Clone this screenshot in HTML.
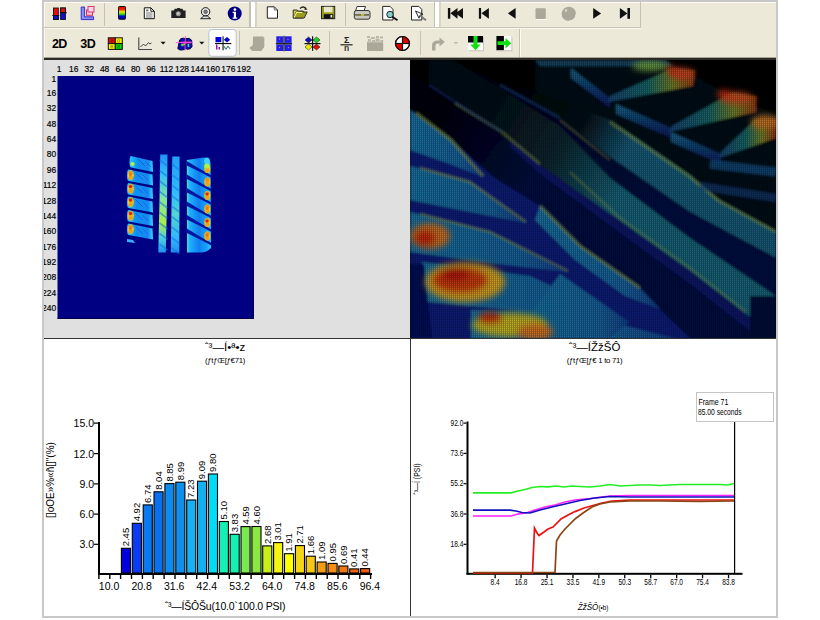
<!DOCTYPE html>
<html><head><meta charset="utf-8"><style>html,body{margin:0;padding:0;background:#fff;width:820px;height:620px;overflow:hidden}svg{display:block}</style></head><body>
<svg width="820" height="620" viewBox="0 0 820 620" font-family="'Liberation Sans', sans-serif">
<!-- window frame -->
<rect x="42" y="0" width="736" height="618" fill="#c8c8c8"/>
<rect x="44" y="2" width="732" height="614" fill="#ffffff"/>
<!-- toolbar bg -->
<rect x="44" y="2" width="732" height="56" fill="#ece9d8"/>
<rect x="44" y="2" width="732" height="1" fill="#fbfaf5"/>
<rect x="44" y="2" width="1" height="55" fill="#fbfaf5"/>
<rect x="44" y="27" width="597" height="1" fill="#c9c6b5"/>
<rect x="44" y="28" width="597" height="1" fill="#f8f7f0"/>
<rect x="44" y="57" width="732" height="1" fill="#a8a594"/>
<rect x="44" y="58" width="732" height="2" fill="#2b2a26"/>
<!-- toolbar group separators row1 -->
<rect x="104" y="3" width="1" height="23" fill="#c5c2b2"/>
<rect x="249" y="2" width="2" height="25" fill="#c5c2b2"/>
<rect x="251" y="2" width="4" height="25" fill="#ffffff"/>
<rect x="255" y="2" width="2" height="25" fill="#d8d5c5"/>
<rect x="345" y="3" width="1" height="23" fill="#c5c2b2"/>
<rect x="434" y="2" width="1" height="25" fill="#c5c2b2"/>
<rect x="435" y="2" width="4" height="25" fill="#ffffff"/>
<rect x="439" y="2" width="2" height="25" fill="#d8d5c5"/>
<rect x="640" y="2" width="1" height="25" fill="#c5c2b2"/>
<!-- row2 separators -->
<rect x="239" y="31" width="1" height="24" fill="#c5c2b2"/>
<rect x="329" y="31" width="1" height="24" fill="#c5c2b2"/>
<rect x="420" y="31" width="1" height="24" fill="#c5c2b2"/>
<rect x="519" y="29" width="1" height="28" fill="#c5c2b2"/>
<rect x="520" y="29" width="1" height="28" fill="#fbfaf5"/>
<!-- panels -->
<rect x="44" y="60" width="366" height="278" fill="#e0e0e0"/>
<rect x="410" y="60" width="366" height="278" fill="#000000"/>
<rect x="44" y="338" width="732" height="1" fill="#333333"/>
<rect x="410" y="339" width="1" height="277" fill="#333333"/>

<defs><clipPath id="lp"><rect x="44" y="60" width="366" height="278"/></clipPath></defs>
<rect x="57.5" y="76" width="196.5" height="243" fill="#000082"/><rect x="253" y="76" width="1" height="243" fill="#000040"/><rect x="57.5" y="318" width="196.5" height="1" fill="#000040"/>
<g font-size="9.6" fill="#000" stroke="#000" stroke-width="0.2" clip-path="url(#lp)">
<text transform="translate(59.2,72.2) scale(0.88,1)" text-anchor="middle">1</text>
<text transform="translate(73.7,72.2) scale(0.88,1)" text-anchor="middle">16</text>
<text transform="translate(89.2,72.2) scale(0.88,1)" text-anchor="middle">32</text>
<text transform="translate(104.6,72.2) scale(0.88,1)" text-anchor="middle">48</text>
<text transform="translate(120.1,72.2) scale(0.88,1)" text-anchor="middle">64</text>
<text transform="translate(135.6,72.2) scale(0.88,1)" text-anchor="middle">80</text>
<text transform="translate(151.1,72.2) scale(0.88,1)" text-anchor="middle">96</text>
<text transform="translate(166.5,72.2) scale(0.88,1)" text-anchor="middle">112</text>
<text transform="translate(182.0,72.2) scale(0.88,1)" text-anchor="middle">128</text>
<text transform="translate(197.5,72.2) scale(0.88,1)" text-anchor="middle">144</text>
<text transform="translate(212.9,72.2) scale(0.88,1)" text-anchor="middle">160</text>
<text transform="translate(228.4,72.2) scale(0.88,1)" text-anchor="middle">176</text>
<text transform="translate(243.9,72.2) scale(0.88,1)" text-anchor="middle">192</text>
<text transform="translate(56.2,81.5) scale(0.88,1)" text-anchor="end">1</text>
<text transform="translate(56.2,95.9) scale(0.88,1)" text-anchor="end">16</text>
<text transform="translate(56.2,111.3) scale(0.88,1)" text-anchor="end">32</text>
<text transform="translate(56.2,126.7) scale(0.88,1)" text-anchor="end">48</text>
<text transform="translate(56.2,142.0) scale(0.88,1)" text-anchor="end">64</text>
<text transform="translate(56.2,157.4) scale(0.88,1)" text-anchor="end">80</text>
<text transform="translate(56.2,172.8) scale(0.88,1)" text-anchor="end">96</text>
<text transform="translate(56.2,188.1) scale(0.88,1)" text-anchor="end">112</text>
<text transform="translate(56.2,203.5) scale(0.88,1)" text-anchor="end">128</text>
<text transform="translate(56.2,218.9) scale(0.88,1)" text-anchor="end">144</text>
<text transform="translate(56.2,234.3) scale(0.88,1)" text-anchor="end">160</text>
<text transform="translate(56.2,249.6) scale(0.88,1)" text-anchor="end">176</text>
<text transform="translate(56.2,265.0) scale(0.88,1)" text-anchor="end">192</text>
<text transform="translate(56.2,280.4) scale(0.88,1)" text-anchor="end">208</text>
<text transform="translate(56.2,295.7) scale(0.88,1)" text-anchor="end">224</text>
<text transform="translate(56.2,311.1) scale(0.88,1)" text-anchor="end">240</text>
</g>
<defs>
<filter id="tb" x="-10%" y="-10%" width="120%" height="120%"><feGaussianBlur stdDeviation="0.55"/></filter>
<linearGradient id="lcol" x1="0" y1="0" x2="1" y2="0">
<stop offset="0" stop-color="#20c8ff"/><stop offset="0.35" stop-color="#1090f4"/><stop offset="0.8" stop-color="#1488f0"/><stop offset="1" stop-color="#40d0ff"/></linearGradient>
<linearGradient id="rcol" x1="0" y1="0" x2="1" y2="0">
<stop offset="0" stop-color="#50e0c0"/><stop offset="0.12" stop-color="#20b0ff"/><stop offset="0.5" stop-color="#1080f0"/><stop offset="0.8" stop-color="#18a0f8"/><stop offset="1" stop-color="#30c8ff"/></linearGradient>
<linearGradient id="s1" x1="0" y1="0" x2="0" y2="1">
<stop offset="0" stop-color="#2090f8"/><stop offset="0.2" stop-color="#30c0f8"/><stop offset="0.45" stop-color="#80e8a0"/><stop offset="0.7" stop-color="#a8f048"/><stop offset="0.85" stop-color="#50d0e0"/><stop offset="1" stop-color="#2090f0"/></linearGradient>
<linearGradient id="s2" x1="0" y1="0" x2="0" y2="1">
<stop offset="0" stop-color="#20a0f8"/><stop offset="0.4" stop-color="#30c0f8"/><stop offset="0.6" stop-color="#50d8d0"/><stop offset="0.85" stop-color="#30b8f8"/><stop offset="1" stop-color="#2090f0"/></linearGradient>
</defs>
<g filter="url(#tb)">
<path d="M131,156.0 L152.5,161.0 L153,172.0 L131,167.5 Q129.5,167.0 129.5,162.0 Q129.5,156.5 131,156.0 z" fill="url(#lcol)"/>
<ellipse cx="132.5" cy="164.0" rx="2.2" ry="2" fill="#b0f050"/>
<path d="M138,159.0 l7,7" stroke="#0850d0" stroke-width="1" opacity="0.7"/>
<path d="M145,161.0 l6,6" stroke="#0850d0" stroke-width="0.8" opacity="0.6"/>
<path d="M128.5,169.5 L152.5,174.5 L153,185.5 L128.5,181.0 Q127.0,180.5 127.0,175.5 Q127.0,170.0 128.5,169.5 z" fill="url(#lcol)"/>
<ellipse cx="130.8" cy="175.3" rx="3" ry="5" fill="#e8d020"/>
<ellipse cx="130.8" cy="173.0" rx="2.2" ry="2.2" fill="#f09018"/>
<ellipse cx="130.8" cy="177.5" rx="2.2" ry="2.2" fill="#f0a018"/>
<ellipse cx="130.5" cy="174.5" rx="1.4" ry="1.4" fill="#f07018"/>
<path d="M135.5,172.5 l7,7" stroke="#0850d0" stroke-width="1" opacity="0.7"/>
<path d="M142.5,174.5 l6,6" stroke="#0850d0" stroke-width="0.8" opacity="0.6"/>
<path d="M128.5,183.0 L152.5,188.0 L153,199.0 L128.5,194.5 Q127.0,194.0 127.0,189.0 Q127.0,183.5 128.5,183.0 z" fill="url(#lcol)"/>
<ellipse cx="130.8" cy="188.8" rx="3" ry="5" fill="#e8d020"/>
<ellipse cx="130.8" cy="186.5" rx="2.2" ry="2.2" fill="#f09018"/>
<ellipse cx="130.8" cy="191.0" rx="2.2" ry="2.2" fill="#f0a018"/>
<ellipse cx="130.5" cy="186.5" rx="1.7" ry="1.7" fill="#e02808"/>
<path d="M135.5,186.0 l7,7" stroke="#0850d0" stroke-width="1" opacity="0.7"/>
<path d="M142.5,188.0 l6,6" stroke="#0850d0" stroke-width="0.8" opacity="0.6"/>
<path d="M128.5,196.5 L152.5,201.5 L153,212.5 L128.5,208.0 Q127.0,207.5 127.0,202.5 Q127.0,197.0 128.5,196.5 z" fill="url(#lcol)"/>
<ellipse cx="130.8" cy="202.3" rx="3" ry="5" fill="#e8d020"/>
<ellipse cx="130.8" cy="200.0" rx="2.2" ry="2.2" fill="#f09018"/>
<ellipse cx="130.8" cy="204.5" rx="2.2" ry="2.2" fill="#f0a018"/>
<ellipse cx="130.5" cy="200.0" rx="1.7" ry="1.7" fill="#e02808"/>
<path d="M135.5,199.5 l7,7" stroke="#0850d0" stroke-width="1" opacity="0.7"/>
<path d="M142.5,201.5 l6,6" stroke="#0850d0" stroke-width="0.8" opacity="0.6"/>
<path d="M128.5,210.0 L152.5,215.0 L153,226.0 L128.5,221.5 Q127.0,221.0 127.0,216.0 Q127.0,210.5 128.5,210.0 z" fill="url(#lcol)"/>
<ellipse cx="130.8" cy="215.8" rx="3" ry="5" fill="#e8d020"/>
<ellipse cx="130.8" cy="213.5" rx="2.2" ry="2.2" fill="#f09018"/>
<ellipse cx="130.8" cy="218.0" rx="2.2" ry="2.2" fill="#f0a018"/>
<ellipse cx="130.5" cy="213.5" rx="1.7" ry="1.7" fill="#e02808"/>
<path d="M135.5,213.0 l7,7" stroke="#0850d0" stroke-width="1" opacity="0.7"/>
<path d="M142.5,215.0 l6,6" stroke="#0850d0" stroke-width="0.8" opacity="0.6"/>
<path d="M128.5,223.5 L152.5,228.5 L153,239.5 L128.5,235.0 Q127.0,234.5 127.0,229.5 Q127.0,224.0 128.5,223.5 z" fill="url(#lcol)"/>
<ellipse cx="130.8" cy="229.3" rx="3" ry="5" fill="#e8d020"/>
<ellipse cx="130.8" cy="227.0" rx="2.2" ry="2.2" fill="#f09018"/>
<ellipse cx="130.8" cy="231.5" rx="2.2" ry="2.2" fill="#f0a018"/>
<ellipse cx="130.5" cy="228.5" rx="1.4" ry="1.4" fill="#f07018"/>
<path d="M135.5,226.5 l7,7" stroke="#0850d0" stroke-width="1" opacity="0.7"/>
<path d="M142.5,228.5 l6,6" stroke="#0850d0" stroke-width="0.8" opacity="0.6"/>
<polygon points="127,239.0 133,240.0 135,243.0 127,242.0" fill="#30b0ff"/>
<polygon points="160.2,154.4 167.5,154.4 167,200 165.8,252.5 158.3,252.5 159.5,200" fill="url(#s1)"/>
<polygon points="172.3,156.5 179.6,156.5 179.3,252.5 170.8,252.5" fill="url(#s2)"/>
<path d="M159.5,160.0 l8,6" stroke="#1070e0" stroke-width="1.6" opacity="0.55"/>
<path d="M171.5,164.0 l8,6" stroke="#1070e0" stroke-width="1.6" opacity="0.5"/>
<path d="M159.5,170.5 l8,6" stroke="#1070e0" stroke-width="1.6" opacity="0.55"/>
<path d="M171.5,174.5 l8,6" stroke="#1070e0" stroke-width="1.6" opacity="0.5"/>
<path d="M159.5,181.0 l8,6" stroke="#1070e0" stroke-width="1.6" opacity="0.55"/>
<path d="M171.5,185.0 l8,6" stroke="#1070e0" stroke-width="1.6" opacity="0.5"/>
<path d="M159.5,191.5 l8,6" stroke="#1070e0" stroke-width="1.6" opacity="0.55"/>
<path d="M171.5,195.5 l8,6" stroke="#1070e0" stroke-width="1.6" opacity="0.5"/>
<path d="M159.5,202.0 l8,6" stroke="#1070e0" stroke-width="1.6" opacity="0.55"/>
<path d="M171.5,206.0 l8,6" stroke="#1070e0" stroke-width="1.6" opacity="0.5"/>
<path d="M159.5,212.5 l8,6" stroke="#1070e0" stroke-width="1.6" opacity="0.55"/>
<path d="M171.5,216.5 l8,6" stroke="#1070e0" stroke-width="1.6" opacity="0.5"/>
<path d="M159.5,223.0 l8,6" stroke="#1070e0" stroke-width="1.6" opacity="0.55"/>
<path d="M171.5,227.0 l8,6" stroke="#1070e0" stroke-width="1.6" opacity="0.5"/>
<path d="M159.5,233.5 l8,6" stroke="#1070e0" stroke-width="1.6" opacity="0.55"/>
<path d="M171.5,237.5 l8,6" stroke="#1070e0" stroke-width="1.6" opacity="0.5"/>
<path d="M159.5,244.0 l8,6" stroke="#1070e0" stroke-width="1.6" opacity="0.55"/>
<path d="M171.5,248.0 l8,6" stroke="#1070e0" stroke-width="1.6" opacity="0.5"/>
<path d="M186.8,160 L204,157.5 Q210,158 210.5,163 L211,248 Q206,253 200,252.5 L187,252.5 z" fill="url(#rcol)"/>
<polygon points="186.8,161.0 200,169.0 211.5,175.5 211.5,178.0 200,172.0 186.8,165.5" fill="#0418a0"/>
<ellipse cx="207.3" cy="168.5" rx="3" ry="4.6" fill="#e8d020"/>
<ellipse cx="207.3" cy="166.5" rx="2.2" ry="2.2" fill="#f09018"/>
<ellipse cx="207.3" cy="170.5" rx="2.2" ry="2.2" fill="#f0a018"/>
<polygon points="186.8,174.5 200,182.5 211.5,189.0 211.5,191.5 200,185.5 186.8,179.0" fill="#0418a0"/>
<ellipse cx="207.3" cy="182.0" rx="3" ry="4.6" fill="#e8d020"/>
<ellipse cx="207.3" cy="180.0" rx="2.2" ry="2.2" fill="#f09018"/>
<ellipse cx="207.3" cy="184.0" rx="2.2" ry="2.2" fill="#f0a018"/>
<polygon points="186.8,188.0 200,196.0 211.5,202.5 211.5,205.0 200,199.0 186.8,192.5" fill="#0418a0"/>
<ellipse cx="207.3" cy="195.5" rx="3" ry="4.6" fill="#e8d020"/>
<ellipse cx="207.3" cy="193.5" rx="2.2" ry="2.2" fill="#f09018"/>
<ellipse cx="207.3" cy="197.5" rx="2.2" ry="2.2" fill="#f0a018"/>
<ellipse cx="207" cy="194.0" rx="1.6" ry="1.6" fill="#e02808"/>
<polygon points="186.8,201.5 200,209.5 211.5,216.0 211.5,218.5 200,212.5 186.8,206.0" fill="#0418a0"/>
<ellipse cx="207.3" cy="209.0" rx="3" ry="4.6" fill="#e8d020"/>
<ellipse cx="207.3" cy="207.0" rx="2.2" ry="2.2" fill="#f09018"/>
<ellipse cx="207.3" cy="211.0" rx="2.2" ry="2.2" fill="#f0a018"/>
<ellipse cx="207" cy="208.5" rx="1.4" ry="1.4" fill="#f07018"/>
<polygon points="186.8,215.0 200,223.0 211.5,229.5 211.5,232.0 200,226.0 186.8,219.5" fill="#0418a0"/>
<ellipse cx="207.3" cy="222.5" rx="3" ry="4.6" fill="#e8d020"/>
<ellipse cx="207.3" cy="220.5" rx="2.2" ry="2.2" fill="#f09018"/>
<ellipse cx="207.3" cy="224.5" rx="2.2" ry="2.2" fill="#f0a018"/>
<ellipse cx="207" cy="221.0" rx="1.6" ry="1.6" fill="#e02808"/>
<polygon points="186.8,228.5 200,236.5 211.5,243.0 211.5,245.5 200,239.5 186.8,233.0" fill="#0418a0"/>
<ellipse cx="207.3" cy="236.0" rx="3" ry="4.6" fill="#e8d020"/>
<ellipse cx="207.3" cy="234.0" rx="2.2" ry="2.2" fill="#f09018"/>
<ellipse cx="207.3" cy="238.0" rx="2.2" ry="2.2" fill="#f0a018"/>
<ellipse cx="207" cy="235.5" rx="1.4" ry="1.4" fill="#f07018"/>

<ellipse cx="207" cy="161" rx="2.8" ry="3.5" fill="#40d0ff"/>
<ellipse cx="207" cy="166" rx="2.8" ry="2.5" fill="#b0f040"/>
</g>
<defs><clipPath id="p3"><rect x="0" y="0" width="366" height="278"/></clipPath>
<pattern id="dots" width="2" height="2" patternUnits="userSpaceOnUse"><rect x="1" y="0" width="1" height="2" fill="#000" opacity="0.3"/><rect x="0" y="1" width="1" height="1" fill="#000" opacity="0.2"/></pattern>
<filter id="b3" x="-20%" y="-20%" width="140%" height="140%"><feGaussianBlur stdDeviation="3"/></filter>
<filter id="b1" x="-5%" y="-5%" width="110%" height="110%"><feGaussianBlur stdDeviation="1"/></filter>
<linearGradient id="r2g" gradientUnits="userSpaceOnUse" x1="80" y1="20" x2="300" y2="150"><stop offset="0" stop-color="#000000"/><stop offset="0.4" stop-color="#050f16"/><stop offset="0.6" stop-color="#155a78"/><stop offset="1" stop-color="#155a78"/></linearGradient>
<linearGradient id="r1g" gradientUnits="userSpaceOnUse" x1="60" y1="50" x2="240" y2="165"><stop offset="0" stop-color="#040a12"/><stop offset="0.45" stop-color="#0a2630"/><stop offset="0.8" stop-color="#176278"/><stop offset="1" stop-color="#176278"/></linearGradient>
<linearGradient id="w2g" gradientUnits="userSpaceOnUse" x1="80" y1="20" x2="250" y2="140"><stop offset="0" stop-color="#02041a"/><stop offset="1" stop-color="#030942"/></linearGradient>
<linearGradient id="chg" gradientUnits="userSpaceOnUse" x1="30" y1="40" x2="130" y2="110"><stop offset="0" stop-color="#01020a"/><stop offset="1" stop-color="#020a40"/></linearGradient>
</defs>
<g transform="translate(410,60)" clip-path="url(#p3)">
<rect x="0" y="0" width="366" height="278" fill="#000"/>
<g filter="url(#b1)">
<polygon points="125.0,0.0 128.0,0.0 132.0,0.0 136.0,0.0 140.0,0.0 144.0,0.0 148.0,0.0 152.0,0.0 156.0,0.0 160.0,0.0 164.0,0.0 168.0,0.0 172.0,0.0 176.0,0.0 180.0,0.0 184.0,0.0 188.0,0.0 192.0,0.0 196.0,0.0 200.0,0.0 204.0,0.0 208.0,0.0 212.0,0.0 216.0,0.0 220.0,0.0 224.0,0.0 228.0,0.0 232.0,0.0 236.0,0.0 240.0,0.0 244.0,0.0 248.0,0.0 252.0,0.0 256.0,0.0 260.0,2.2 264.0,4.4 268.0,6.7 272.0,8.9 276.0,11.1 280.0,13.3 284.0,15.6 288.0,17.8 292.0,20.0 296.0,22.2 300.0,24.4 304.0,26.4 308.0,28.2 312.0,30.1 316.0,31.9 320.0,33.8 324.0,35.6 328.0,37.5 332.0,39.3 336.0,41.2 340.0,43.0 344.0,44.8 348.0,46.7 352.0,48.5 356.0,50.4 360.0,52.2 364.0,54.1 366.0,55.0 366.0,171.0 364.0,169.9 360.0,167.7 356.0,165.6 352.0,163.4 348.0,161.2 344.0,159.0 340.0,156.9 336.0,154.7 332.0,152.5 328.0,150.3 324.0,148.2 320.0,146.0 316.0,143.8 312.0,141.6 308.0,139.1 304.0,135.7 300.0,132.2 296.0,128.8 292.0,125.3 288.0,121.9 284.0,118.4 280.0,115.0 276.0,112.2 272.0,109.5 268.0,106.8 264.0,104.0 260.0,101.2 256.0,98.5 252.0,95.8 248.0,93.0 244.0,90.2 240.0,87.5 236.0,84.8 232.0,82.0 228.0,79.2 224.0,76.5 220.0,73.8 216.0,71.0 212.0,68.2 208.0,65.5 204.0,62.8 200.0,60.0 196.0,58.4 192.0,56.8 188.0,55.2 184.0,53.6 180.0,52.0 176.0,50.4 172.0,48.8 168.0,47.2 164.0,45.6 160.0,44.0 156.0,42.4 152.0,40.8 148.0,39.3 144.0,37.9 140.0,36.4 136.0,35.0 132.0,33.6 128.0,32.2 125.0,31.1" fill="#040a12" />
<polygon points="60.0,8.0 64.0,9.4 68.0,10.8 72.0,12.3 76.0,13.7 80.0,15.1 84.0,16.5 88.0,18.0 92.0,19.4 96.0,20.8 100.0,22.2 104.0,23.6 108.0,25.1 112.0,26.5 116.0,27.9 120.0,29.3 124.0,30.8 128.0,32.2 132.0,33.6 136.0,35.0 140.0,36.4 144.0,37.9 148.0,39.3 152.0,40.8 156.0,42.4 160.0,44.0 164.0,45.6 168.0,47.2 172.0,48.8 176.0,50.4 180.0,52.0 184.0,53.6 188.0,55.2 192.0,56.8 196.0,58.4 200.0,60.0 204.0,62.8 208.0,65.5 212.0,68.2 216.0,71.0 220.0,73.8 224.0,76.5 228.0,79.2 232.0,82.0 236.0,84.8 240.0,87.5 244.0,90.2 248.0,93.0 252.0,95.8 256.0,98.5 260.0,101.2 264.0,104.0 268.0,106.8 272.0,109.5 276.0,112.2 280.0,115.0 284.0,118.4 288.0,121.9 292.0,125.3 296.0,128.8 300.0,132.2 304.0,135.7 308.0,139.1 312.0,141.6 316.0,143.8 320.0,146.0 324.0,148.2 328.0,150.3 332.0,152.5 336.0,154.7 340.0,156.9 344.0,159.0 348.0,161.2 352.0,163.4 356.0,165.6 360.0,167.7 364.0,169.9 366.0,171.0 366.0,198.0 364.0,196.9 360.0,194.8 356.0,192.7 352.0,190.5 348.0,188.4 344.0,186.2 340.0,184.1 336.0,182.0 332.0,179.8 328.0,177.7 324.0,175.5 320.0,173.4 316.0,171.3 312.0,169.1 308.0,167.0 304.0,164.8 300.0,162.7 296.0,160.6 292.0,158.4 288.0,156.3 284.0,154.1 280.0,152.0 276.0,149.2 272.0,146.5 268.0,143.8 264.0,141.0 260.0,138.2 256.0,135.5 252.0,132.8 248.0,130.0 244.0,127.2 240.0,124.5 236.0,121.8 232.0,119.0 228.0,116.2 224.0,113.5 220.0,110.8 216.0,108.0 212.0,105.2 208.0,102.5 204.0,99.8 200.0,97.0 196.0,93.9 192.0,90.8 188.0,87.6 184.0,84.5 180.0,81.4 176.0,78.3 172.0,75.2 168.0,72.0 164.0,68.9 160.0,65.8 156.0,62.7 152.0,59.6 148.0,56.9 144.0,54.7 140.0,52.5 136.0,50.3 132.0,48.1 128.0,45.9 124.0,43.7 120.0,41.5 116.0,39.3 112.0,37.1 108.0,34.9 104.0,32.7 100.0,30.5 96.0,28.3 92.0,26.1 88.0,23.9 84.0,21.6 80.0,19.4 76.0,17.2 72.0,14.9 68.0,12.7 64.0,10.4 60.0,8.2" fill="url(#r2g)" />
<polygon points="65.0,11.0 68.0,12.7 72.0,14.9 76.0,17.2 80.0,19.4 84.0,21.6 88.0,23.9 92.0,26.1 96.0,28.3 100.0,30.5 104.0,32.7 108.0,34.9 112.0,37.1 116.0,39.3 120.0,41.5 124.0,43.7 128.0,45.9 132.0,48.1 136.0,50.3 140.0,52.5 144.0,54.7 148.0,56.9 152.0,59.6 156.0,62.7 160.0,65.8 164.0,68.9 168.0,72.0 172.0,75.2 176.0,78.3 180.0,81.4 184.0,84.5 188.0,87.6 192.0,90.8 196.0,93.9 200.0,97.0 204.0,99.8 208.0,102.5 212.0,105.2 216.0,108.0 220.0,110.8 224.0,113.5 228.0,116.2 232.0,119.0 236.0,121.8 240.0,124.5 244.0,127.2 248.0,130.0 252.0,132.8 256.0,135.5 260.0,138.2 264.0,141.0 268.0,143.8 272.0,146.5 276.0,149.2 280.0,152.0 284.0,154.1 288.0,156.3 292.0,158.4 296.0,160.6 300.0,162.7 304.0,164.8 308.0,167.0 312.0,169.1 316.0,171.3 320.0,173.4 324.0,175.5 328.0,177.7 332.0,179.8 336.0,182.0 340.0,184.1 344.0,186.2 348.0,188.4 352.0,190.5 356.0,192.7 360.0,194.8 364.0,196.9 366.0,198.0 366.0,236.0 364.0,234.7 360.0,232.0 356.0,229.3 352.0,226.6 348.0,223.9 344.0,221.2 340.0,218.5 336.0,215.8 332.0,213.1 328.0,210.4 324.0,207.7 320.0,205.0 316.0,202.3 312.0,199.6 308.0,196.9 304.0,194.2 300.0,191.5 296.0,188.8 292.0,186.1 288.0,183.4 284.0,180.7 280.0,178.0 276.0,175.0 272.0,172.0 268.0,169.0 264.0,166.0 260.0,163.0 256.0,160.0 252.0,157.0 248.0,154.0 244.0,151.0 240.0,148.0 236.0,145.0 232.0,142.0 228.0,139.0 224.0,136.0 220.0,133.0 216.0,130.0 212.0,127.0 208.0,124.0 204.0,121.0 200.0,118.0 196.0,113.8 192.0,109.7 188.0,105.5 184.0,101.4 180.0,97.2 176.0,93.0 172.0,88.9 168.0,84.7 164.0,80.6 160.0,76.4 156.0,72.2 152.0,68.1 148.0,64.8 144.0,62.3 140.0,59.8 136.0,57.3 132.0,54.8 128.0,52.3 124.0,49.8 120.0,47.3 116.0,44.8 112.0,42.3 108.0,39.8 104.0,37.3 100.0,34.8 96.0,32.3 92.0,29.8 88.0,27.3 84.0,24.8 80.0,22.4 76.0,19.9 72.0,17.4 68.0,14.9 65.0,13.0" fill="url(#w2g)" />
<polygon points="19.0,-15.7 20.0,-15.1 24.0,-12.6 28.0,-10.1 32.0,-7.6 36.0,-5.1 40.0,-2.6 44.0,-0.1 48.0,2.4 52.0,4.9 56.0,7.4 60.0,9.9 64.0,12.4 68.0,14.9 72.0,17.4 76.0,19.9 80.0,22.4 84.0,24.8 88.0,27.3 92.0,29.8 96.0,32.3 100.0,34.8 104.0,37.3 108.0,39.8 112.0,42.3 116.0,44.8 120.0,47.3 124.0,49.8 128.0,52.3 132.0,54.8 136.0,57.3 140.0,59.8 144.0,62.3 148.0,64.8 152.0,68.1 156.0,72.2 160.0,76.4 164.0,80.6 168.0,84.7 172.0,88.9 176.0,93.0 180.0,97.2 184.0,101.4 188.0,105.5 192.0,109.7 196.0,113.8 200.0,118.0 204.0,121.0 208.0,124.0 212.0,127.0 216.0,130.0 220.0,133.0 224.0,136.0 228.0,139.0 232.0,142.0 236.0,145.0 240.0,148.0 244.0,151.0 248.0,154.0 252.0,157.0 256.0,160.0 260.0,163.0 264.0,166.0 268.0,169.0 272.0,172.0 276.0,175.0 280.0,178.0 284.0,180.7 288.0,183.4 292.0,186.1 296.0,188.8 300.0,191.5 304.0,194.2 308.0,196.9 312.0,199.6 316.0,202.3 320.0,205.0 324.0,207.7 328.0,210.4 332.0,213.1 336.0,215.8 340.0,218.5 344.0,221.2 348.0,223.9 352.0,226.6 356.0,229.3 360.0,232.0 364.0,234.7 366.0,236.0 366.0,276.0 364.0,274.5 360.0,271.6 356.0,268.7 352.0,265.7 348.0,262.8 344.0,259.9 340.0,256.9 336.0,254.0 332.0,250.9 328.0,247.9 324.0,244.8 320.0,241.7 316.0,238.6 312.0,235.6 308.0,232.5 304.0,229.4 300.0,226.4 296.0,223.3 292.0,220.2 288.0,217.1 284.0,214.1 280.0,211.0 276.0,208.1 272.0,205.3 268.0,202.4 264.0,199.6 260.0,196.7 256.0,193.9 252.0,191.0 248.0,188.1 244.0,185.3 240.0,182.4 236.0,179.6 232.0,176.7 228.0,173.9 224.0,171.0 220.0,168.1 216.0,165.3 212.0,162.4 208.0,159.6 204.0,156.8 200.0,154.0 196.0,151.2 192.0,148.4 188.0,145.6 184.0,142.8 180.0,140.0 176.0,137.2 172.0,134.4 168.0,131.6 164.0,128.8 160.0,126.0 156.0,123.2 152.0,120.4 148.0,117.6 144.0,114.8 140.0,112.0 136.0,109.2 132.0,106.4 128.0,103.3 124.0,99.8 120.0,96.3 116.0,92.8 112.0,89.4 108.0,85.9 104.0,82.4 100.0,78.9 96.0,75.5 92.0,72.0 88.0,69.2 84.0,66.5 80.0,63.7 76.0,61.0 72.0,58.2 68.0,55.4 64.0,52.7 60.0,49.9 56.0,47.1 52.0,44.4 48.0,41.8 44.0,39.5 40.0,37.2 36.0,34.9 32.0,32.5 28.0,30.2 24.0,27.9 20.0,25.6 19.0,25.0" fill="url(#r1g)" />
<polygon points="0.0,14.0 4.0,16.3 8.0,18.6 12.0,20.9 16.0,23.3 20.0,25.6 24.0,27.9 28.0,30.2 32.0,32.5 36.0,34.9 40.0,37.2 44.0,39.5 48.0,41.8 52.0,44.4 56.0,47.1 60.0,49.9 64.0,52.7 68.0,55.4 72.0,58.2 76.0,61.0 80.0,63.7 84.0,66.5 88.0,69.2 92.0,72.0 96.0,75.5 100.0,78.9 104.0,82.4 108.0,85.9 112.0,89.4 116.0,92.8 120.0,96.3 124.0,99.8 128.0,103.3 132.0,106.4 136.0,109.2 140.0,112.0 144.0,114.8 148.0,117.6 152.0,120.4 156.0,123.2 160.0,126.0 164.0,128.8 168.0,131.6 172.0,134.4 176.0,137.2 180.0,140.0 184.0,142.8 188.0,145.6 192.0,148.4 196.0,151.2 200.0,154.0 204.0,156.8 208.0,159.6 212.0,162.4 216.0,165.3 220.0,168.1 224.0,171.0 228.0,173.9 232.0,176.7 236.0,179.6 240.0,182.4 244.0,185.3 248.0,188.1 252.0,191.0 256.0,193.9 260.0,196.7 264.0,199.6 268.0,202.4 272.0,205.3 276.0,208.1 280.0,211.0 284.0,214.1 288.0,217.1 292.0,220.2 296.0,223.3 300.0,226.4 304.0,229.4 308.0,232.5 312.0,235.6 316.0,238.6 320.0,241.7 324.0,244.8 328.0,247.9 332.0,250.9 336.0,254.0 340.0,256.9 344.0,259.9 348.0,262.8 352.0,265.7 356.0,268.7 360.0,271.6 364.0,274.5 366.0,276.0 366.0,372.6 364.0,370.4 360.0,366.0 356.0,361.6 352.0,357.2 348.0,352.8 344.0,348.4 340.0,344.0 336.0,339.6 332.0,335.2 328.0,330.8 324.0,326.4 320.0,322.0 316.0,317.6 312.0,313.2 308.0,308.8 304.0,304.4 300.0,300.0 296.0,295.6 292.0,291.2 288.0,286.8 284.0,282.4 280.0,278.0 276.0,274.1 272.0,270.3 268.0,266.4 264.0,262.5 260.0,258.7 256.0,254.8 252.0,250.9 248.0,246.9 244.0,242.7 240.0,238.5 236.0,234.3 232.0,230.1 228.0,226.6 224.0,223.8 220.0,221.0 216.0,218.2 212.0,215.4 208.0,212.6 204.0,209.8 200.0,207.0 196.0,204.2 192.0,201.4 188.0,198.6 184.0,195.8 180.0,193.0 176.0,190.2 172.0,187.4 168.0,184.0 164.0,180.0 160.0,176.0 156.0,172.0 152.0,168.0 148.0,164.0 144.0,160.0 140.0,156.0 136.0,152.0 132.0,148.0 128.0,144.8 124.0,142.3 120.0,139.8 116.0,137.3 112.0,134.8 108.0,132.3 104.0,129.8 100.0,127.3 96.0,124.8 92.0,122.4 88.0,119.9 84.0,117.1 80.0,113.7 76.0,110.2 72.0,106.8 68.0,103.3 64.0,99.9 60.0,96.4 56.0,93.0 52.0,89.5 48.0,86.0 44.0,82.6 40.0,79.3 36.0,76.3 32.0,73.4 28.0,70.5 24.0,67.6 20.0,64.6 16.0,61.7 12.0,58.8 8.0,55.9 4.0,52.9 0.0,50.0" fill="url(#chg)" />
<polygon points="100.0,78.9 104.0,82.4 108.0,85.9 112.0,89.4 116.0,92.8 120.0,96.3 124.0,99.8 128.0,103.3 132.0,106.4 136.0,109.2 140.0,112.0 144.0,114.8 148.0,117.6 152.0,120.4 156.0,123.2 160.0,126.0 164.0,128.8 168.0,131.6 172.0,134.4 176.0,137.2 180.0,140.0 184.0,142.8 188.0,145.6 192.0,148.4 196.0,151.2 200.0,154.0 204.0,156.8 208.0,159.6 212.0,162.4 216.0,165.3 220.0,168.1 224.0,171.0 228.0,173.9 232.0,176.7 236.0,179.6 240.0,182.4 244.0,185.3 248.0,188.1 252.0,191.0 256.0,193.9 260.0,196.7 264.0,199.6 268.0,202.4 272.0,205.3 276.0,208.1 280.0,211.0 284.0,214.1 288.0,217.1 292.0,220.2 296.0,223.3 300.0,226.4 304.0,229.4 308.0,232.5 312.0,235.6 316.0,238.6 320.0,241.7 324.0,244.8 328.0,247.9 332.0,250.9 336.0,254.0 340.0,256.9 344.0,259.9 348.0,262.8 352.0,265.7 356.0,268.7 360.0,271.6 364.0,274.5 366.0,276.0 366.0,290.0 364.0,288.5 360.0,285.6 356.0,282.7 352.0,279.7 348.0,276.8 344.0,273.9 340.0,270.9 336.0,268.0 332.0,264.9 328.0,261.7 324.0,258.6 320.0,255.4 316.0,252.3 312.0,249.1 308.0,246.0 304.0,242.9 300.0,239.7 296.0,236.6 292.0,233.4 288.0,230.3 284.0,227.1 280.0,224.0 276.0,221.1 272.0,218.2 268.0,215.3 264.0,212.3 260.0,209.4 256.0,206.5 252.0,203.6 248.0,200.7 244.0,197.8 240.0,194.9 236.0,191.9 232.0,189.0 228.0,186.1 224.0,183.2 220.0,180.3 216.0,177.4 212.0,174.5 208.0,171.5 204.0,168.6 200.0,165.6 196.0,162.7 192.0,159.7 188.0,156.8 184.0,153.8 180.0,150.9 176.0,147.9 172.0,145.0 168.0,142.0 164.0,139.1 160.0,136.1 156.0,133.2 152.0,130.2 148.0,127.3 144.0,124.3 140.0,121.4 136.0,118.4 132.0,115.5 128.0,112.2 124.0,108.6 120.0,105.1 116.0,101.5 112.0,97.9 108.0,94.3 104.0,90.7 100.0,87.2" fill="#1030a0" opacity="0.4"/>
<polygon points="340,236 366,236 366,290 340,290" fill="#020838"/>
<polygon points="0.0,50.0 4.0,52.9 8.0,55.9 12.0,58.8 16.0,61.7 20.0,64.6 24.0,67.6 28.0,70.5 32.0,73.4 36.0,76.3 40.0,79.3 44.0,82.6 48.0,86.0 52.0,89.5 56.0,93.0 60.0,96.4 64.0,99.9 68.0,103.3 72.0,106.8 76.0,110.2 80.0,113.7 84.0,117.1 88.0,119.9 92.0,122.4 96.0,124.8 100.0,127.3 104.0,129.8 108.0,132.3 112.0,134.8 116.0,137.3 120.0,139.8 124.0,142.3 128.0,144.8 132.0,148.0 136.0,152.0 140.0,156.0 144.0,160.0 148.0,164.0 152.0,168.0 156.0,172.0 160.0,176.0 164.0,180.0 168.0,184.0 172.0,187.4 176.0,190.2 180.0,193.0 184.0,195.8 188.0,198.6 192.0,201.4 196.0,204.2 200.0,207.0 204.0,209.8 208.0,212.6 212.0,215.4 216.0,218.2 220.0,221.0 224.0,223.8 228.0,226.6 232.0,230.1 236.0,234.3 240.0,238.5 244.0,242.7 248.0,246.9 252.0,250.9 256.0,254.8 260.0,258.7 264.0,262.5 268.0,266.4 272.0,270.3 276.0,274.1 280.0,278.0 284.0,282.4 288.0,286.8 292.0,291.2 296.0,295.6 300.0,300.0 304.0,304.4 308.0,308.8 312.0,313.2 316.0,317.6 320.0,322.0 324.0,326.4 328.0,330.8 332.0,335.2 336.0,339.6 340.0,344.0 344.0,348.4 348.0,352.8 352.0,357.2 356.0,361.6 360.0,366.0 364.0,370.4 366.0,372.6 366.0,300.0 364.0,300.0 360.0,300.0 356.0,300.0 352.0,300.0 348.0,300.0 344.0,300.0 340.0,300.0 336.0,300.0 332.0,300.0 328.0,300.0 324.0,300.0 320.0,300.0 316.0,300.0 312.0,300.0 308.0,300.0 304.0,300.0 300.0,300.0 296.0,300.0 292.0,300.0 288.0,300.0 284.0,300.0 280.0,300.0 276.0,300.0 272.0,300.0 268.0,300.0 264.0,300.0 260.0,300.0 256.0,300.0 252.0,300.0 248.0,300.0 244.0,300.0 240.0,300.0 236.0,300.0 232.0,300.0 228.0,300.0 224.0,300.0 220.0,300.0 216.0,300.0 212.0,300.0 208.0,300.0 204.0,300.0 200.0,300.0 196.0,300.0 192.0,300.0 188.0,300.0 184.0,300.0 180.0,300.0 176.0,300.0 172.0,300.0 168.0,300.0 164.0,300.0 160.0,300.0 156.0,300.0 152.0,300.0 148.0,300.0 144.0,300.0 140.0,300.0 136.0,300.0 132.0,300.0 128.0,300.0 124.0,300.0 120.0,300.0 116.0,300.0 112.0,300.0 108.0,300.0 104.0,300.0 100.0,300.0 96.0,300.0 92.0,300.0 88.0,300.0 84.0,300.0 80.0,300.0 76.0,300.0 72.0,300.0 68.0,300.0 64.0,300.0 60.0,300.0 56.0,300.0 52.0,300.0 48.0,300.0 44.0,300.0 40.0,300.0 36.0,300.0 32.0,300.0 28.0,300.0 24.0,300.0 20.0,300.0 16.0,300.0 12.0,300.0 8.0,300.0 4.0,300.0 0.0,300.0" fill="#081c78" />
<linearGradient id="tg" x1="0" y1="0" x2="1" y2="0"><stop offset="0" stop-color="#1a70a0"/><stop offset="0.7" stop-color="#16609a"/><stop offset="1" stop-color="#10408a"/></linearGradient>
<polygon points="0,50 41,80 73,117 40,104 0,90" fill="url(#tg)" />
<polygon points="0,106 60,122 116,163 60,152 0,140" fill="url(#tg)" />
<polygon points="0,152 80,172 158,212 80,203 0,192" fill="url(#tg)" />
<polygon points="12,202 120,216 219,262 120,252 18,242" fill="url(#tg)" />
<polygon points="61,250 160,252 268,279 61,279" fill="url(#tg)" />
<polygon points="130,146 170,186 200,207 230,228 250,249 215,236 165,200 125,160" fill="url(#tg)" />
<polygon points="150,214 219,262 200,278 150,278 120,255" fill="url(#tg)" />
<polygon points="0,204 14,204 22,278 0,278" fill="#040c58" />
<polyline points="6,53 41,80 73,116" stroke="#90a840" stroke-width="3" fill="none" opacity="0.6" stroke-linejoin="round"/>
<polyline points="10,108 60,122 116,162" stroke="#90a840" stroke-width="2.5" fill="none" opacity="0.55" stroke-linejoin="round"/>
<polyline points="10,154 80,172 158,211" stroke="#90a840" stroke-width="2.5" fill="none" opacity="0.5" stroke-linejoin="round"/>
<polyline points="130,146 170,186 200,207 230,228" stroke="#90a840" stroke-width="3" fill="none" opacity="0.55" stroke-linejoin="round"/>
<polyline points="45,43 92,72 130,104" stroke="#90a840" stroke-width="2.5" fill="none" opacity="0.5" stroke-linejoin="round"/>
<polyline points="160,112 210,158 280,208 336,252" stroke="#90a840" stroke-width="2.5" fill="none" opacity="0.35" stroke-linejoin="round"/>
<polyline points="200,62 280,117 309,141 366,172" stroke="#90a840" stroke-width="3" fill="none" opacity="0.5" stroke-linejoin="round"/>
<polyline points="150,60 200,100" stroke="#90a840" stroke-width="2" fill="none" opacity="0.4" stroke-linejoin="round"/>
<polyline points="90,25 150,58" stroke="#1a4a8a" stroke-width="2" fill="none" opacity="0.6" stroke-linejoin="round"/>
<polyline points="19,25 92,72" stroke="#1a3a8a" stroke-width="2" fill="none" opacity="0.6" stroke-linejoin="round"/>
<linearGradient id="rfg" x1="0" y1="0" x2="1" y2="0"><stop offset="0" stop-color="#1a5a9a"/><stop offset="0.45" stop-color="#1a8a8a"/><stop offset="0.75" stop-color="#a0b030"/><stop offset="1" stop-color="#d04a10"/></linearGradient>
<linearGradient id="lfg" x1="0" y1="0" x2="0" y2="1"><stop offset="0" stop-color="#1a7aa0"/><stop offset="1" stop-color="#0a1a70"/></linearGradient>
<polygon points="161,8 200,38 200,48 161,18" fill="url(#lfg)" opacity="0.8"/>
<polygon points="206,44 261,68 261,78 206,54" fill="url(#lfg)" opacity="0.8"/>
<polygon points="261,72 311,94 311,104 261,82" fill="url(#lfg)" opacity="0.8"/>
<polygon points="198,42 283,26 285,10 262,9 200,36" fill="url(#rfg)" opacity="0.7"/>
<polygon points="259,72 346,52 347,36 322,33 262,66" fill="url(#rfg)" opacity="0.7"/>
<polygon points="309,98 366,78 366,60 345,60 311,92" fill="url(#rfg)" opacity="0.7"/>
<polygon points="125,0 256,0 262,6 130,6" fill="#1a5a80" opacity="0.7"/>
<polyline points="300,104 366,112" stroke="#165890" stroke-width="9" fill="none" opacity="0.7" stroke-linejoin="round"/>
<polyline points="290,126 366,138" stroke="#12488a" stroke-width="8" fill="none" opacity="0.6" stroke-linejoin="round"/>
</g>
<g filter="url(#b3)">
<ellipse cx="20" cy="176" rx="20" ry="13" fill="#c87020"/>
<ellipse cx="15" cy="178" rx="11" ry="8" fill="#c02810"/>
<ellipse cx="55" cy="222" rx="40" ry="20" fill="#d0a020"/>
<ellipse cx="50" cy="220" rx="28" ry="13" fill="#c83a10"/>
<ellipse cx="45" cy="214" rx="14" ry="7" fill="#b01808"/>
<ellipse cx="100" cy="265" rx="38" ry="12" fill="#c0b020"/>
<ellipse cx="80" cy="258" rx="12" ry="6" fill="#c03010"/>
<ellipse cx="125" cy="272" rx="18" ry="8" fill="#d07020"/>
<ellipse cx="272" cy="14" rx="12" ry="6" fill="#c84020"/>
<ellipse cx="262" cy="10" rx="6" ry="4" fill="#d02010"/>
<ellipse cx="326" cy="38" rx="16" ry="6" fill="#c84a20"/>
<ellipse cx="314" cy="34" rx="7" ry="4" fill="#d02a10"/>
<ellipse cx="355" cy="62" rx="14" ry="7" fill="#c07020"/>
<ellipse cx="240" cy="6" rx="18" ry="5" fill="#70a040"/>
</g>
<rect x="0" y="0" width="366" height="278" fill="url(#dots)"/>
</g>
<g fill="#000">
<text x="225" y="350.5" font-size="11.5" text-anchor="middle">ˆ³—Í•ª•z</text>
<text x="225" y="362.5" font-size="7.8" text-anchor="middle" letter-spacing="-0.3">(ƒtƒŒ[ƒ€71)</text>
<text x="594.5" y="350.5" font-size="11.5" text-anchor="middle">ˆ³—ÍŽžŠÔ</text>
<text x="594.5" y="362.5" font-size="7.8" text-anchor="middle" letter-spacing="-0.3">(ƒtƒŒ[ƒ€ 1 to 71)</text>
</g>

<!-- histogram axes -->
<rect x="98" y="422" width="2" height="153" fill="#000"/>
<rect x="98" y="573" width="274" height="2" fill="#000"/>
<g fill="#000">
<rect x="94" y="422.5" width="4" height="1.2"/>
<rect x="94" y="453" width="4" height="1.2"/>
<rect x="94" y="483.3" width="4" height="1.2"/>
<rect x="94" y="513.5" width="4" height="1.2"/>
<rect x="94" y="543.7" width="4" height="1.2"/>
</g>
<g font-size="10.5" fill="#000" text-anchor="end">
<text x="94" y="427">15.0</text>
<text x="94" y="457.5">12.0</text>
<text x="94" y="487.5">9.0</text>
<text x="94" y="518">6.0</text>
<text x="94" y="548">3.0</text>
</g>
<g fill="#000"><rect x="98.2" y="575" width="1.4" height="4"/><rect x="109.1" y="575" width="1.4" height="4"/><rect x="119.9" y="575" width="1.4" height="4"/><rect x="130.8" y="575" width="1.4" height="4"/><rect x="141.7" y="575" width="1.4" height="4"/><rect x="152.5" y="575" width="1.4" height="4"/><rect x="163.4" y="575" width="1.4" height="4"/><rect x="174.3" y="575" width="1.4" height="4"/><rect x="185.2" y="575" width="1.4" height="4"/><rect x="196.0" y="575" width="1.4" height="4"/><rect x="206.9" y="575" width="1.4" height="4"/><rect x="217.8" y="575" width="1.4" height="4"/><rect x="228.6" y="575" width="1.4" height="4"/><rect x="239.5" y="575" width="1.4" height="4"/><rect x="250.4" y="575" width="1.4" height="4"/><rect x="261.2" y="575" width="1.4" height="4"/><rect x="272.1" y="575" width="1.4" height="4"/><rect x="283.0" y="575" width="1.4" height="4"/><rect x="293.9" y="575" width="1.4" height="4"/><rect x="304.7" y="575" width="1.4" height="4"/><rect x="315.6" y="575" width="1.4" height="4"/><rect x="326.5" y="575" width="1.4" height="4"/><rect x="337.3" y="575" width="1.4" height="4"/><rect x="348.2" y="575" width="1.4" height="4"/><rect x="359.1" y="575" width="1.4" height="4"/><rect x="369.9" y="575" width="1.4" height="4"/></g>
<text transform="translate(53.5,480) rotate(-90)" font-size="10" text-anchor="middle">[]oOE»%«ñ[]"(%)</text>
<g font-size="10.5" fill="#000">
<text x="98.8" y="590">10.0</text>
<text x="131.4" y="590">20.8</text>
<text x="164" y="590">31.6</text>
<text x="196.6" y="590">42.4</text>
<text x="229.3" y="590">53.2</text>
<text x="261.9" y="590">64.0</text>
<text x="294.5" y="590">74.8</text>
<text x="327.1" y="590">85.6</text>
<text x="359.7" y="590">96.4</text>
</g>
<text x="225" y="609.5" font-size="10.5" text-anchor="middle" letter-spacing="-0.2">ˆ³—ÍŠÔŠu(10.0`100.0 PSI)</text>

<rect x="121.4" y="548.3" width="9.1" height="24.7" fill="#0000dc" stroke="#000" stroke-width="1.1"/>
<text transform="translate(129.2,546.3) rotate(-90)" font-size="9.5">2.45</text>
<rect x="132.3" y="523.3" width="9.1" height="49.7" fill="#0a3cf5" stroke="#000" stroke-width="1.1"/>
<text transform="translate(140.0,521.3) rotate(-90)" font-size="9.5">4.92</text>
<rect x="143.2" y="504.9" width="9.1" height="68.1" fill="#0a78f0" stroke="#000" stroke-width="1.1"/>
<text transform="translate(150.9,502.9) rotate(-90)" font-size="9.5">6.74</text>
<rect x="154.0" y="491.8" width="9.1" height="81.2" fill="#0a70ee" stroke="#000" stroke-width="1.1"/>
<text transform="translate(161.8,489.8) rotate(-90)" font-size="9.5">8.04</text>
<rect x="164.9" y="483.6" width="9.1" height="89.4" fill="#0c8cf0" stroke="#000" stroke-width="1.1"/>
<text transform="translate(172.7,481.6) rotate(-90)" font-size="9.5">8.85</text>
<rect x="175.8" y="482.2" width="9.1" height="90.8" fill="#1090ee" stroke="#000" stroke-width="1.1"/>
<text transform="translate(183.5,480.2) rotate(-90)" font-size="9.5">8.99</text>
<rect x="186.7" y="500.0" width="9.1" height="73.0" fill="#16b0f4" stroke="#000" stroke-width="1.1"/>
<text transform="translate(194.4,498.0) rotate(-90)" font-size="9.5">7.23</text>
<rect x="197.5" y="481.2" width="9.1" height="91.8" fill="#14b0f0" stroke="#000" stroke-width="1.1"/>
<text transform="translate(205.3,479.2) rotate(-90)" font-size="9.5">9.09</text>
<rect x="208.4" y="474.0" width="9.1" height="99.0" fill="#00dcf5" stroke="#000" stroke-width="1.1"/>
<text transform="translate(216.1,472.0) rotate(-90)" font-size="9.5">9.80</text>
<rect x="219.3" y="521.5" width="9.1" height="51.5" fill="#14f0b4" stroke="#000" stroke-width="1.1"/>
<text transform="translate(227.0,519.5) rotate(-90)" font-size="9.5">5.10</text>
<rect x="230.1" y="534.3" width="9.1" height="38.7" fill="#14f0b0" stroke="#000" stroke-width="1.1"/>
<text transform="translate(237.9,532.3) rotate(-90)" font-size="9.5">3.83</text>
<rect x="241.0" y="526.6" width="9.1" height="46.4" fill="#7ae850" stroke="#000" stroke-width="1.1"/>
<text transform="translate(248.7,524.6) rotate(-90)" font-size="9.5">4.59</text>
<rect x="251.9" y="526.5" width="9.1" height="46.5" fill="#8ae840" stroke="#000" stroke-width="1.1"/>
<text transform="translate(259.6,524.5) rotate(-90)" font-size="9.5">4.60</text>
<rect x="262.7" y="545.9" width="9.1" height="27.1" fill="#c8f014" stroke="#000" stroke-width="1.1"/>
<text transform="translate(270.5,543.9) rotate(-90)" font-size="9.5">2.68</text>
<rect x="273.6" y="542.6" width="9.1" height="30.4" fill="#f5f514" stroke="#000" stroke-width="1.1"/>
<text transform="translate(281.4,540.6) rotate(-90)" font-size="9.5">3.01</text>
<rect x="284.5" y="553.7" width="9.1" height="19.3" fill="#ffff00" stroke="#000" stroke-width="1.1"/>
<text transform="translate(292.2,551.7) rotate(-90)" font-size="9.5">1.91</text>
<rect x="295.4" y="545.6" width="9.1" height="27.4" fill="#f5d614" stroke="#000" stroke-width="1.1"/>
<text transform="translate(303.1,543.6) rotate(-90)" font-size="9.5">2.71</text>
<rect x="306.2" y="556.2" width="9.1" height="16.8" fill="#f5c814" stroke="#000" stroke-width="1.1"/>
<text transform="translate(314.0,554.2) rotate(-90)" font-size="9.5">1.66</text>
<rect x="317.1" y="562.0" width="9.1" height="11.0" fill="#f59e14" stroke="#000" stroke-width="1.1"/>
<text transform="translate(324.8,560.0) rotate(-90)" font-size="9.5">1.09</text>
<rect x="328.0" y="563.4" width="9.1" height="9.6" fill="#f58c14" stroke="#000" stroke-width="1.1"/>
<text transform="translate(335.7,561.4) rotate(-90)" font-size="9.5">0.95</text>
<rect x="338.8" y="566.0" width="9.1" height="7.0" fill="#f07814" stroke="#000" stroke-width="1.1"/>
<text transform="translate(346.6,564.0) rotate(-90)" font-size="9.5">0.69</text>
<rect x="349.7" y="568.9" width="9.1" height="4.1" fill="#ee6414" stroke="#000" stroke-width="1.1"/>
<text transform="translate(357.4,566.9) rotate(-90)" font-size="9.5">0.41</text>
<rect x="360.6" y="568.6" width="9.1" height="4.4" fill="#ee5a14" stroke="#000" stroke-width="1.1"/>
<text transform="translate(368.3,566.6) rotate(-90)" font-size="9.5">0.44</text>
<rect x="466.5" y="421.5" width="2" height="153" fill="#000"/>
<rect x="466.5" y="572.8" width="276" height="2" fill="#000"/>
<rect x="463.5" y="422.5" width="3" height="1.2" fill="#000"/>
<text transform="translate(463.3,425.8) scale(0.8,1)" font-size="8.2" text-anchor="end">92.0</text>
<rect x="463.5" y="452.8" width="3" height="1.2" fill="#000"/>
<text transform="translate(463.3,456.1) scale(0.8,1)" font-size="8.2" text-anchor="end">73.6</text>
<rect x="463.5" y="483.1" width="3" height="1.2" fill="#000"/>
<text transform="translate(463.3,486.40000000000003) scale(0.8,1)" font-size="8.2" text-anchor="end">55.2</text>
<rect x="463.5" y="513.4" width="3" height="1.2" fill="#000"/>
<text transform="translate(463.3,516.6999999999999) scale(0.8,1)" font-size="8.2" text-anchor="end">36.8</text>
<rect x="463.5" y="543.7" width="3" height="1.2" fill="#000"/>
<text transform="translate(463.3,547.0) scale(0.8,1)" font-size="8.2" text-anchor="end">18.4</text>
<rect x="494.5" y="574.8" width="1.3" height="3.5" fill="#000"/>
<text transform="translate(495.1,585) scale(0.8,1)" font-size="8.2" text-anchor="middle">8.4</text>
<rect x="520.4" y="574.8" width="1.3" height="3.5" fill="#000"/>
<text transform="translate(521.0,585) scale(0.8,1)" font-size="8.2" text-anchor="middle">16.8</text>
<rect x="546.4" y="574.8" width="1.3" height="3.5" fill="#000"/>
<text transform="translate(547.0,585) scale(0.8,1)" font-size="8.2" text-anchor="middle">25.1</text>
<rect x="572.3" y="574.8" width="1.3" height="3.5" fill="#000"/>
<text transform="translate(572.9,585) scale(0.8,1)" font-size="8.2" text-anchor="middle">33.5</text>
<rect x="598.2" y="574.8" width="1.3" height="3.5" fill="#000"/>
<text transform="translate(598.8,585) scale(0.8,1)" font-size="8.2" text-anchor="middle">41.9</text>
<rect x="624.1" y="574.8" width="1.3" height="3.5" fill="#000"/>
<text transform="translate(624.8,585) scale(0.8,1)" font-size="8.2" text-anchor="middle">50.3</text>
<rect x="650.1" y="574.8" width="1.3" height="3.5" fill="#000"/>
<text transform="translate(650.7,585) scale(0.8,1)" font-size="8.2" text-anchor="middle">58.7</text>
<rect x="676.0" y="574.8" width="1.3" height="3.5" fill="#000"/>
<text transform="translate(676.6,585) scale(0.8,1)" font-size="8.2" text-anchor="middle">67.0</text>
<rect x="701.9" y="574.8" width="1.3" height="3.5" fill="#000"/>
<text transform="translate(702.5,585) scale(0.8,1)" font-size="8.2" text-anchor="middle">75.4</text>
<rect x="727.9" y="574.8" width="1.3" height="3.5" fill="#000"/>
<text transform="translate(728.5,585) scale(0.8,1)" font-size="8.2" text-anchor="middle">83.8</text>
<text transform="translate(419.5,479) rotate(-90) scale(0.85,1)" font-size="8.2" text-anchor="middle">ˆ³—Í (PSI)</text>
<text transform="translate(593,610) scale(0.9,1)" font-size="9" text-anchor="middle" font-style="italic">ŽžŠÔ<tspan font-size="7" font-style="normal">(•b)</tspan></text>
<rect x="696.5" y="392.5" width="77" height="29" fill="#fff" stroke="#c4c4c4" stroke-width="1"/>
<text transform="translate(698.5,405) scale(0.85,1)" font-size="8.2">Frame 71</text>
<text transform="translate(698,415) scale(0.82,1)" font-size="8.2">85.00 seconds</text>
<rect x="734" y="422" width="1.2" height="151" fill="#000"/>
<polyline points="473,573 532.5,573 534.5,528 537,533 539,535.5 544,532 548,529 553,527 561,519 568,515 575,511.6 584,508 593,505.5 602,503 612,501 630,500 660,500 700,500 734,500" fill="none" stroke="#ee1111" stroke-width="1.7"/>
<polyline points="473,572.5 555,572.5 556.5,541 560,535 565,529 570,524 575,519 583,513 592,507 600,504 610,502 630,501 660,501 700,501.5 734,501" fill="none" stroke="#8b4513" stroke-width="1.7"/>
<polyline points="473,516 511,516 518,514 526,513 535,510 545,507 555,505 565,502 575,500 590,498.5 610,496 630,495.5 660,495.5 700,495.5 734,495.5" fill="none" stroke="#ff22ff" stroke-width="1.7"/>
<polyline points="473,510.2 510,510.2 516,511 522,512.5 530,513 540,510 552,507 565,504 580,500.5 595,498 610,496.5 630,497 650,497 680,497 734,497" fill="none" stroke="#1010c0" stroke-width="1.7"/>
<polyline points="473,492.8 511,492.8 518,491 525,489.5 532,487.5 540,486.5 548,486.8 556,486 564,487 572,486 580,486.5 590,487 600,486 610,484.5 620,486 630,485.5 640,485 650,485 660,485.5 670,485 680,484.5 690,484.5 700,484.5 710,484.5 720,484.5 728,485 734,483.5" fill="none" stroke="#22ee22" stroke-width="1.7"/>
<!-- ROW 1 ICONS -->
<!-- 1 cylinders -->
<g>
<rect x="53.5" y="8" width="4.8" height="11.5" fill="#e01010" stroke="#111" stroke-width="0.9"/>
<rect x="53.5" y="15.5" width="4.8" height="4" fill="#1010c8" stroke="#111" stroke-width="0.9"/>
<rect x="52.3" y="15" width="7" height="1" fill="#111"/>
<rect x="60.6" y="8" width="4.8" height="11.5" fill="#1010d8" stroke="#111" stroke-width="0.9"/>
<rect x="60.6" y="8" width="4.8" height="4.5" fill="#e01010" stroke="#111" stroke-width="0.9"/>
<rect x="59.8" y="12.3" width="7" height="1" fill="#111"/>
</g>
<!-- 2 blue L with pink squares -->
<g>
<path d="M81.2,7 h3.4 v9.8 h9 v2.8 h-12.4 z" fill="#8c8cf0" stroke="#3030d0" stroke-width="1"/>
<rect x="86.5" y="10" width="6" height="5.3" fill="#f8c8d8" stroke="#d83060" stroke-width="1"/>
<rect x="88" y="6.5" width="6" height="5.5" fill="#f8d8e8" stroke="#d83878" stroke-width="1"/>
</g>
<!-- 3 rainbow -->
<defs>
<linearGradient id="rb" x1="0" y1="0" x2="0" y2="1">
<stop offset="0" stop-color="#e00000"/><stop offset="0.25" stop-color="#f03000"/><stop offset="0.42" stop-color="#f0f000"/><stop offset="0.62" stop-color="#20d020"/><stop offset="0.75" stop-color="#0000e0"/><stop offset="1" stop-color="#0000a0"/>
</linearGradient>
</defs>
<rect x="118.5" y="6.5" width="7" height="12.8" rx="0.8" fill="url(#rb)" stroke="#111" stroke-width="1"/>
<!-- 4 document -->
<path d="M144.3,7.8 h6.5 l3.5,3.5 v7.4 h-10 z" fill="#fff" stroke="#111" stroke-width="1"/>
<path d="M150.8,7.8 v3.5 h3.5" fill="none" stroke="#111" stroke-width="0.9"/>
<rect x="146" y="12.5" width="6.5" height="1" fill="#777"/><rect x="146" y="14.5" width="6.5" height="1" fill="#777"/><rect x="146" y="16.5" width="6.5" height="1" fill="#777"/>
<rect x="146" y="9.5" width="2.5" height="1.8" fill="#777"/>
<!-- 5 camera -->
<path d="M171.3,10.5 h2.5 l1-1.8 h2 l0.8,-0.7 h2 l0.8,0.7 h2 l1,1.8 h2.2 v7.5 h-14.3 z" fill="#222"/>
<circle cx="178.3" cy="13.8" r="3" fill="#999" stroke="#111" stroke-width="0.8"/>
<circle cx="178.3" cy="13.5" r="1.2" fill="#ccc"/>
<!-- 6 webcam -->
<circle cx="205.6" cy="11.8" r="4.2" fill="#eee" stroke="#111" stroke-width="1"/>
<circle cx="205.6" cy="11.8" r="1.8" fill="#888" stroke="#111" stroke-width="0.6"/>
<path d="M203.8,16 l-3.2,2.7 h10 l-3.2,-2.7 z" fill="#ddd" stroke="#111" stroke-width="0.9"/>
<!-- 7 info -->
<circle cx="234.7" cy="13.5" r="7" fill="#000080"/>
<circle cx="234.9" cy="9.6" r="1.4" fill="#fff"/>
<path d="M232.6,11.8 h3.4 v5.6 h1.2 v1.3 h-4.6 v-1.3 h1.2 v-4.3 h-1.2 z" fill="#fff"/>
<!-- 8 new doc -->
<path d="M267.3,6.8 h7 l3.2,3.2 v8.2 h-10.2 z" fill="#fff" stroke="#222" stroke-width="1"/>
<path d="M274.3,6.8 v3.2 h3.2" fill="none" stroke="#444" stroke-width="0.8"/>
<!-- 9 folder -->
<path d="M293.2,10 h4 l1,1 h5 v7 h-10 z" fill="#c8c840" stroke="#222" stroke-width="0.9"/>
<path d="M293.2,18 l3,-6 h11 l-3,6 z" fill="#9c9c1c" stroke="#222" stroke-width="0.9"/>
<path d="M294,17.5 l2.5,-5 h6" fill="none" stroke="#f0f080" stroke-width="1.2"/>
<path d="M300,8.5 q3,-3 6,0" fill="none" stroke="#222" stroke-width="1.2"/>
<path d="M305,7 l2.5,2.5 l-3,0.5 z" fill="#222"/>
<!-- 10 floppy -->
<rect x="321.5" y="6.4" width="13.2" height="12.3" fill="#9c9c1c" stroke="#222" stroke-width="1"/>
<rect x="324" y="6.8" width="8.5" height="5.5" fill="#e8e8d0"/>
<rect x="323.8" y="14.2" width="9.5" height="4.5" fill="#111"/>
<rect x="330.5" y="15" width="1.8" height="2.5" fill="#eee"/>
<!-- 11 printer -->
<path d="M357,6.5 h8.5 l-1.5,4.5 h-8.5 z" fill="#fff" stroke="#222" stroke-width="0.9"/>
<rect x="354.3" y="10.5" width="15.7" height="8.7" rx="2" fill="#c8c8c0" stroke="#222" stroke-width="0.9"/>
<rect x="355" y="14" width="14" height="1.8" fill="#707050"/>
<rect x="361" y="14" width="3" height="1.8" fill="#c8c040"/>
<!-- 12 preview -->
<path d="M382.7,6.4 h7.3 l3,3 v10.6 h-10.3 z" fill="#fff" stroke="#222" stroke-width="1"/>
<circle cx="390" cy="14.5" r="3.2" fill="#80d0d0" stroke="#222" stroke-width="1"/>
<path d="M392.3,16.8 l5.2,3.5" stroke="#111" stroke-width="1.8"/>
<!-- 13 doc cursor -->
<path d="M411.5,6.4 h7.3 l3,3 v10.6 h-10.3 z" fill="#fff" stroke="#222" stroke-width="1"/>
<path d="M415.5,11 l7.5,3.2 l-3,1 l-1,3 z" fill="#fff" stroke="#111" stroke-width="0.9"/>
<path d="M420.5,16 l5.5,4.2" stroke="#777" stroke-width="1.8"/>
<!-- 14-16 playback back -->
<g fill="#111">
<rect x="447.9" y="8" width="2.4" height="10.7"/>
<path d="M450.4,13.35 L457.5,8 V18.7 z"/>
<path d="M455.5,13.35 L463,8 V18.7 z"/>
<rect x="478.9" y="8" width="2.2" height="10.7"/>
<path d="M481.4,13.35 L488.9,8 V18.7 z"/>
<path d="M507.9,13.35 L515.6,8 V18.7 z"/>
<!-- play -->
<path d="M601.1,13.4 L593.2,8 V18.8 z"/>
<path d="M627.4,13.4 L619.9,8 V18.8 z"/>
<rect x="627.4" y="8" width="2.6" height="10.8"/>
</g>
<!-- stop gray -->
<rect x="535.5" y="8.3" width="10.3" height="10.8" rx="1" fill="#aca899"/>
<rect x="536.5" y="19" width="10" height="1" fill="#fff" opacity="0.8"/>
<!-- record gray -->
<circle cx="568.8" cy="13.9" r="7.2" fill="#aca899"/>
<path d="M568.8,21.1 a7.2,7.2 0 0 0 7.2,-7.2" fill="none" stroke="#fff" stroke-width="0.8" opacity="0.8"/>
<circle cx="566" cy="10.5" r="1.3" fill="#d8d6cc"/>

<!-- ROW 2 ICONS -->
<g font-weight="bold" font-size="12.5" fill="#000" letter-spacing="-0.6">
<text x="52" y="47.7">2D</text>
<text x="80.3" y="47.7">3D</text>
</g>
<!-- grid colored -->
<g stroke="#111" stroke-width="1">
<rect x="108.3" y="37.8" width="7" height="5.8" fill="#e01010"/>
<rect x="115.3" y="37.8" width="7" height="5.8" fill="#f8f000"/>
<rect x="108.3" y="43.6" width="7" height="5.8" fill="#f8f800"/>
<rect x="115.3" y="43.6" width="7" height="5.8" fill="#10d010"/>
</g>
<g fill="none" stroke-width="0.6" opacity="0.75">
<path d="M110.8,39.8 h2 v1.2 h-2 v1.2 h2" stroke="#600"/><path d="M117.6,39.8 h2 v2.4 h-2 z" stroke="#660"/><path d="M110.8,45.4 h2 v2.4 h-2 z M110.8,46.6 h2" stroke="#660"/><path d="M117.6,45.4 h2 v1.2 h-2 v1.2 h2" stroke="#060"/>
</g>
<!-- line chart icon -->
<path d="M138.8,37.5 V49.5 H152" fill="none" stroke="#444" stroke-width="1.1"/>
<path d="M140.5,47 l3,-3 l2,2 l3,-3.5 l1.5,1.5 l1.5,-1" fill="none" stroke="#444" stroke-width="1"/>
<!-- dropdowns -->
<path d="M160.5,41.8 h5.2 l-2.6,2.8 z" fill="#111"/>
<path d="M199.2,41.8 h5.2 l-2.6,2.8 z" fill="#111"/>
<!-- blob -->
<path d="M177.8,48.6 L179.6,40 Q180.6,38 183.6,38.2 L185.6,38.8 L185.2,49.2 Q183,50.2 179.8,49.9 Z" fill="#0c0ca8" stroke="#00004a" stroke-width="1"/>
<path d="M185.4,38.6 Q189.8,37.4 191.6,40.2 L192,46.6 Q191,49.6 187.2,49.2 L185.2,48.2 Z" fill="#1010a0" stroke="#00004a" stroke-width="1"/>
<rect x="181" y="41.6" width="10.2" height="1.9" fill="#e03070"/>
<rect x="181.2" y="44" width="2.4" height="2.2" fill="#40e040"/>
<rect x="183.4" y="43.5" width="1.6" height="1.6" fill="#f0d030"/>
<rect x="187.6" y="44" width="1.6" height="3" fill="#40d0e0"/>
<path d="M185.4,36 L184.9,50.5" stroke="#ff50ff" stroke-width="0.9"/>
<path d="M175.8,42.6 L193,42.2" stroke="#ff50ff" stroke-width="0.9"/>
<!-- pressed button -->
<rect x="208.8" y="29.5" width="27.4" height="26.8" rx="3" fill="#fcfcfa" stroke="#b8c4d2" stroke-width="1"/>
<rect x="215.5" y="37" width="5.8" height="5.2" fill="#0000e8"/>
<path d="M227,37 l3.2,2.8 l-3.2,2.8 l-3.2,-2.8 z" fill="#0000c8"/>
<rect x="216" y="44.5" width="1.5" height="5" fill="#902090"/><rect x="218.5" y="47" width="1.5" height="2.5" fill="#902090"/>
<path d="M224,46 l2,3 l2,-3 l2,3" fill="none" stroke="#30a030" stroke-width="0.9"/>
<path d="M224,47 l2,2.5 l2,-3 l2,2" fill="none" stroke="#4040c0" stroke-width="0.6"/>
<rect x="222.5" y="36.3" width="1.1" height="14" fill="#111"/>
<rect x="215" y="43" width="16.3" height="1.1" fill="#111"/>
<!-- gray boot -->
<path d="M253,36.5 h10 l1.8,2 v8.5 l-3,4 h-9.5 l-3,-3 l3.5,-3 z" fill="#aca899"/>
<path d="M264.8,38.5 v8.5 l-3,4" fill="none" stroke="#fff" stroke-width="0.8" opacity="0.7"/>
<!-- 4 blue squares -->
<g fill="#2020e8">
<rect x="276.3" y="36.3" width="6.8" height="6.6"/><rect x="284.8" y="36.3" width="6.8" height="6.6"/>
<rect x="276.3" y="44.4" width="6.8" height="6.6"/><rect x="284.8" y="44.4" width="6.8" height="6.6"/>
</g>
<g fill="#e060a0"><circle cx="279.5" cy="39" r="0.7"/><circle cx="288" cy="39.5" r="0.7"/><circle cx="279.5" cy="47.5" r="0.7"/><circle cx="288.5" cy="47.5" r="0.7"/></g>
<rect x="283.4" y="35.8" width="1.2" height="15.5" fill="#111"/>
<rect x="275.8" y="43.1" width="16.3" height="1.2" fill="#111"/>
<!-- 4 diamonds -->
<path d="M308.5,37 l3.5,3 l-3.5,3 l-3.5,-3 z" fill="#1010c0" stroke="#111" stroke-width="0.5"/>
<path d="M316.5,37 l3.5,3 l-3.5,3 l-3.5,-3 z" fill="#20d020" stroke="#111" stroke-width="0.5"/>
<path d="M308.5,44 l3.5,3 l-3.5,3 l-3.5,-3 z" fill="#f0f000" stroke="#111" stroke-width="0.5"/>
<path d="M316.5,44 l3.5,3 l-3.5,3 l-3.5,-3 z" fill="#e01010" stroke="#111" stroke-width="0.5"/>
<rect x="312" y="36.3" width="1.2" height="14.5" fill="#111"/>
<rect x="304.5" y="43" width="16" height="1.2" fill="#111"/>
<!-- sigma n -->
<text x="346.7" y="42.8" font-size="9" font-weight="bold" text-anchor="middle" fill="#222">Σ</text>
<rect x="340.4" y="44.2" width="12.2" height="1.2" fill="#222"/>
<text x="346.7" y="50.5" font-size="8.5" font-weight="bold" text-anchor="middle" fill="#333">n</text>
<!-- gray image -->
<rect x="367" y="43" width="16.2" height="8" fill="#aca899"/>
<g fill="#aca899" opacity="0.75">
<rect x="367" y="36" width="3" height="2"/><rect x="371" y="37" width="4" height="2"/><rect x="376" y="36" width="3" height="2.5"/><rect x="380" y="36.5" width="3" height="2"/>
<rect x="368" y="39" width="3" height="2.5"/><rect x="372" y="40" width="3" height="2"/><rect x="375.5" y="39" width="4" height="2.5"/><rect x="380.5" y="40" width="2.7" height="2"/>
<rect x="367" y="41.5" width="16" height="1.5"/>
</g>
<!-- red/white circle -->
<circle cx="402.5" cy="43.5" r="7" fill="#fff" stroke="#111" stroke-width="1.2"/>
<path d="M402.5,43.5 V36.5 A7,7 0 0 1 409.5,43.5 z" fill="#e00000"/>
<path d="M402.5,43.5 V50.5 A7,7 0 0 1 395.5,43.5 z" fill="#e00000"/>
<circle cx="402.5" cy="43.5" r="7" fill="none" stroke="#111" stroke-width="1.2"/>
<rect x="401.9" y="36.5" width="1.2" height="14" fill="#111"/>
<rect x="395.5" y="42.9" width="14" height="1.2" fill="#111"/>
<!-- gray curved arrow -->
<path d="M432,50.5 v-5 q0,-5 6,-5 h1.5 v-3 l5.3,4.5 l-5.3,4.5 v-3 h-1.5 q-2.5,0 -2.5,2.5 v4.5 z" fill="#aca899"/>
<path d="M453.3,42 h5.2 l-2.6,2.3 z" fill="#c0bdb0"/>
<!-- down arrow -->
<rect x="468" y="36" width="15" height="14.3" fill="#fff"/>
<rect x="468" y="36" width="15" height="6.5" fill="#000"/>
<rect x="483" y="37" width="1" height="13.5" fill="#c8c6b8"/>
<rect x="469" y="50.3" width="15" height="1" fill="#c8c6b8"/>
<path d="M473.5,36 h4 v8.5 h3.2 l-5.2,5.8 l-5.2,-5.8 h3.2 z" fill="#10e010"/>
<!-- right arrow -->
<rect x="496.4" y="36" width="15" height="14.3" fill="#fff"/>
<rect x="496.4" y="36" width="7.5" height="14.3" fill="#000"/>
<rect x="511.4" y="37" width="1" height="13.5" fill="#c8c6b8"/>
<rect x="497.4" y="50.3" width="15" height="1" fill="#c8c6b8"/>
<path d="M497.5,41.3 h8 v-3.3 l5.8,5.2 l-5.8,5.2 v-3.3 h-8 z" fill="#10e010"/>

</svg></body></html>
